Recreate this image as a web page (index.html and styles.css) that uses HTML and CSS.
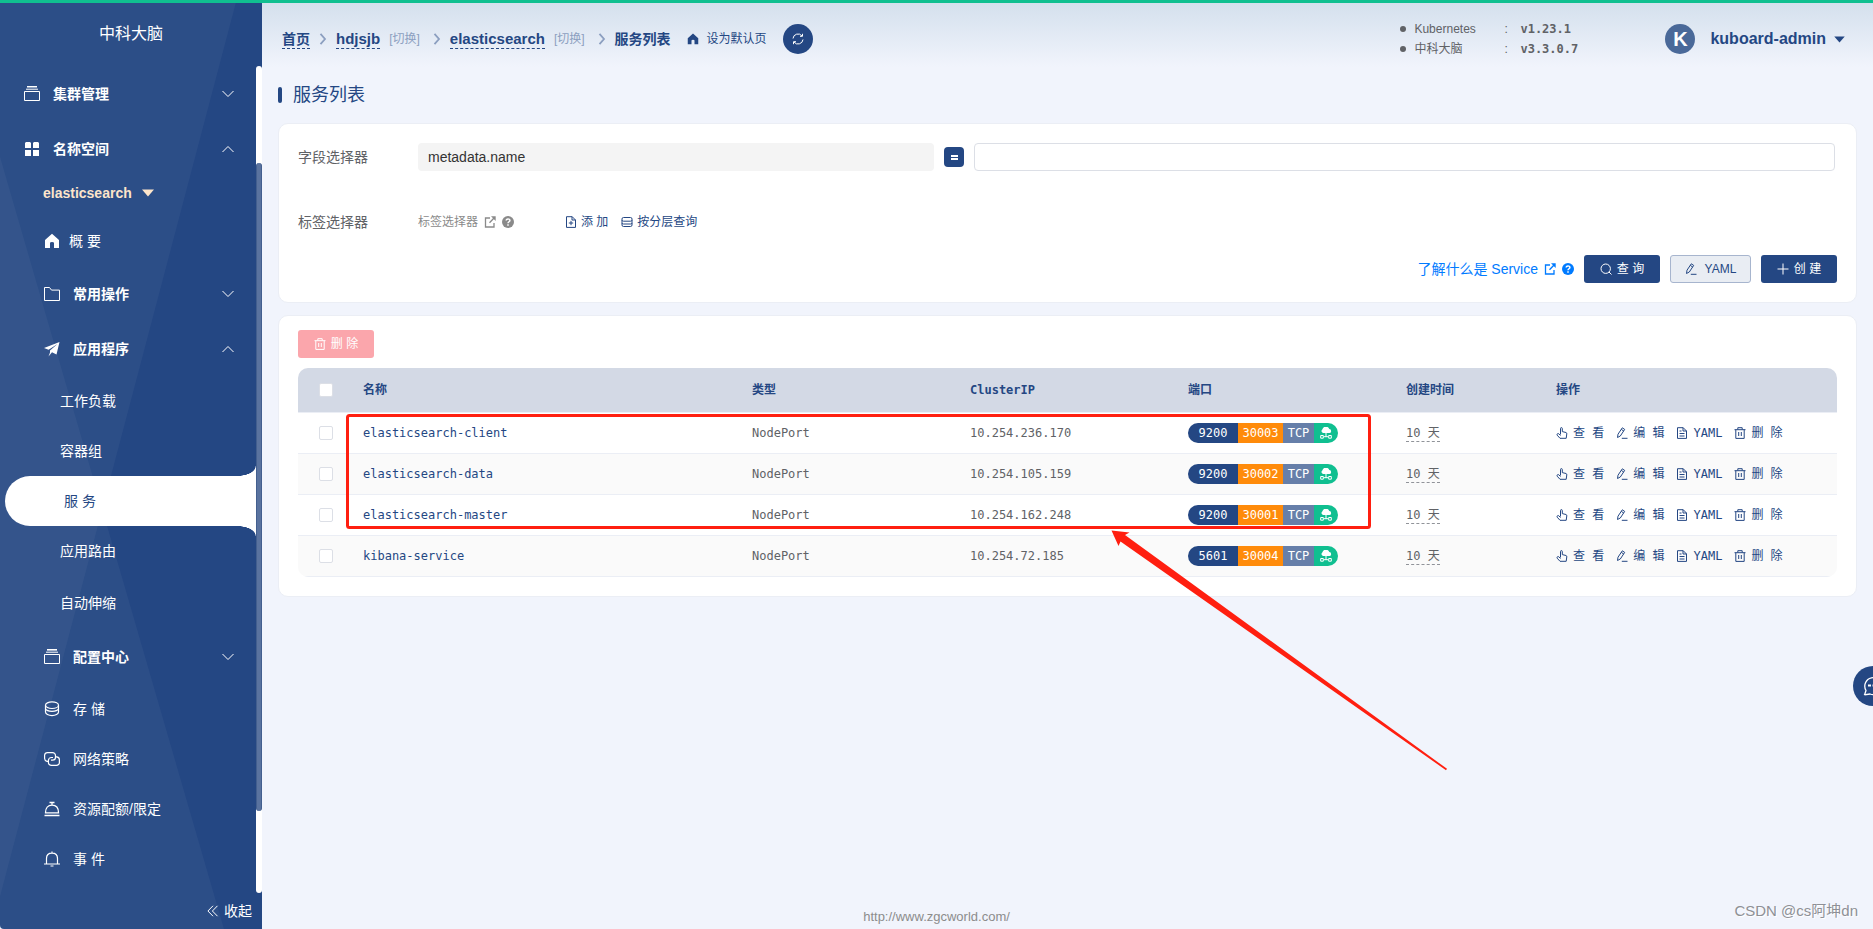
FILE: index.html
```
<!DOCTYPE html>
<html lang="zh-CN">
<head>
<meta charset="utf-8">
<title>服务列表</title>
<link rel="stylesheet" href="styles.css">
</head>
<body>
<svg class="sprite" aria-hidden="true">
  <symbol id="i-box" viewBox="0 0 16 16"><path d="M.5 5.5h15v9H.5zM2 3.2h12" fill="none" stroke="currentColor"/><path d="M3 0h10v1.6H3z" fill="currentColor"/></symbol>
  <symbol id="i-grid" viewBox="0 0 16 16"><path d="M2 1h4l1 1v5H1V2zM10 1h4l1 1v5H9V2zM1 9h6v6H1zM9 9h6v6H9z" fill="currentColor"/></symbol>
  <symbol id="i-home" viewBox="0 0 16 16"><path d="M8 .8 1 7v8h5v-5q0-1 2-1t2 1v5h5V7z" fill="currentColor"/></symbol>
  <symbol id="i-folder" viewBox="0 0 16 16"><path d="M.5 14.5v-13h5l2 2.6h8v10.400z" fill="none" stroke="currentColor"/></symbol>
  <symbol id="i-plane" viewBox="0 0 16 16"><path d="M15.500 1 0 7l4.600 1.800L13.500 3 6 9.600v1.900l-1.500 3.900L8 11.200l4.500 2.300z" fill="currentColor"/></symbol>
  <symbol id="i-coin" viewBox="0 0 16 16"><g fill="none" stroke="currentColor" stroke-width="1.200"><ellipse cx="8" cy="4.200" rx="6.500" ry="3.300"/><path d="M1.500 4.200V11c0 2 3 3.600 6.500 3.600s6.500-1.600 6.500-3.600V4.200M1.500 7.800C2.300 9.500 5 10.300 8 10.300s5.700-.8 6.500-2.500"/></g></symbol>
  <symbol id="i-link" viewBox="0 0 16 16"><g fill="none" stroke="currentColor" stroke-width="1.200"><path d="M4 10.300H3A3 3 0 0 1 .6 7.500V4.300A3 3 0 0 1 3.500 1.600h5a3 3 0 0 1 3 3v1.600a3 3 0 0 1-3 3H7"/><path d="M12 5.800h.6a3 3 0 0 1 2.800 3v2.600a3 3 0 0 1-3 3h-5a3 3 0 0 1-3-3V9.500a3 3 0 0 1 3-3H9"/></g></symbol>
  <symbol id="i-dish" viewBox="0 0 16 16"><path d="M.5 14.500h15M1.500 11.800h13C14.500 7 12 4.200 8 4.200S1.500 7 1.500 11.800zM8 4V2M5.500 1.500h5" fill="none" stroke="currentColor" stroke-width="1.300"/></symbol>
  <symbol id="i-bell" viewBox="0 0 16 16"><path d="M0 13h16M2.500 13V7.500C2.500 4 5 2.200 8 2.200S13.500 4 13.500 7.500V13M8 2V.5M6.500 15h3" fill="none" stroke="currentColor" stroke-width="1.200"/></symbol>
  <symbol id="i-down" viewBox="0 0 12 8"><path d="m.5 1 5.500 5.500L11.500 1" fill="none" stroke="currentColor"/></symbol>
  <symbol id="i-up" viewBox="0 0 12 8"><path d="M.5 7 6 1.500 11.500 7" fill="none" stroke="currentColor"/></symbol>
  <symbol id="i-caret" viewBox="0 0 12 8"><path d="M0 .5h12L6 7.500z" fill="currentColor"/></symbol>
  <symbol id="i-fold" viewBox="0 0 12 12"><path d="M6 .8.900 6 6 11.200M10.500.8 5.400 6l5.100 5.200" fill="none" stroke="currentColor"/></symbol>
  <symbol id="i-sep" viewBox="0 0 8 12"><path d="m1.500.800 4.500 5.200-4.500 5.200" fill="none" stroke="currentColor" stroke-width="1.800"/></symbol>
  <symbol id="i-refresh" viewBox="0 0 12 12"><path d="M1 5.500A5 5 0 0 1 10 3M10.500.800V3.300H8M11 6.500A5 5 0 0 1 2 9M1.500 11.200V8.700H4" fill="none" stroke="currentColor"/></symbol>
  <symbol id="i-ext" viewBox="0 0 12 12"><path d="M6 2H1.500v9h8.500V7M5.500 6.800 10.500 1.500" fill="none" stroke="currentColor" stroke-width="1.300"/><path d="M7 .3h4.700V5z" fill="currentColor"/></symbol>
  <symbol id="i-help" viewBox="0 0 12 12"><circle cx="6" cy="6" r="6" fill="currentColor"/><path d="M4.200 4.600C4.200 2.300 7.900 2.400 7.900 4.400 7.900 5.800 6 5.700 6 7.300M6 8.300v1.500" fill="none" stroke="#fff" stroke-width="1.500"/></symbol>
  <symbol id="i-docplus" viewBox="0 0 12 12"><path d="M1.500.7h5.700L10.500 4v7.400h-9zM7 .7V4h3.500M6 4.800v4.400M3.800 7h4.400" fill="none" stroke="currentColor"/></symbol>
  <symbol id="i-stack" viewBox="0 0 12 12"><path d="M2.500 1.500h7q1.500 0 1.500 1.500v6q0 1.500-1.500 1.500h-7Q1 10.500 1 9V3q0-1.500 1.500-1.500zM1 4.200q0 1 1.500 1h7q1.500 0 1.500-1M1 7q0 1 1.500 1h7Q11 8 11 7" fill="none" stroke="currentColor"/></symbol>
  <symbol id="i-search" viewBox="0 0 12 12"><circle cx="5.700" cy="5.700" r="4.700" fill="none" stroke="currentColor"/><path d="m9 9 2.500 2.500" stroke="currentColor"/></symbol>
  <symbol id="i-plus" viewBox="0 0 12 12"><path d="M6 .5v11M.5 6h11" stroke="currentColor"/></symbol>
  <symbol id="i-pen" viewBox="0 0 12 12"><path d="M1.500 10.500 2 7.200 6.300.8l2.400 1.600L4.300 9zM5.300 2.400l2.400 1.600M5.800 11.300H11.500" fill="none" stroke="currentColor"/></symbol>
  <symbol id="i-hand" viewBox="0 0 12 12"><path d="M4.500 7.500V1.600q0-1 .9-1 .9 0 .9 1v3l3.700.9q.9.300.8 1.300l-.6 4.500H4L1.200 8.200q-.4-1 .3-1.500.8-.5 1.500.3l1.500 1.500" fill="none" stroke="currentColor"/></symbol>
  <symbol id="i-doc" viewBox="0 0 12 12"><path d="M1.500.7h5.700L10.500 4v7.400h-9zM7 .7V4h3.500M3.500 4h2M3.500 6.500h5M3.500 9h5" fill="none" stroke="currentColor"/></symbol>
  <symbol id="i-trash" viewBox="0 0 12 12"><path d="M.5 2.700h11M3.800 2.500V.7h4.400v1.800M1.800 2.700v8.700h8.400V2.700M4.700 5v4M7.300 5v4" fill="none" stroke="currentColor"/></symbol>
  <symbol id="i-cloud" viewBox="0 0 12 12"><path d="M3.300 6A2 2 0 0 1 2.300 2.400 3.700 3.700 0 0 1 9.300 2a2 2 0 0 1-.3 4z" fill="currentColor"/><path d="M6 5v5M4 9.700h4M.7 8.500h2.600v2.700H.7zM8.700 8.500h2.600v2.700H8.700z" fill="none" stroke="currentColor"/></symbol>
  <symbol id="i-chat" viewBox="0 0 20 20"><path d="M1.500 19 3 14.500A8.500 8.500 0 1 1 7 18l-5.500.8z" fill="none" stroke="currentColor" stroke-width="1.300"/><path d="M5 9.500h3M9.500 9.500h2.500M13.500 9.500H16" stroke="currentColor" stroke-width="2"/></symbol>
</svg>
<div class="topbar"></div>
<div class="app">
  <aside class="sidebar">
    <div class="brand">中科大脑</div>
    <div class="side-body">
      <nav class="menu">
        <button class="item group"><svg class="ic16"><use href="#i-box"/></svg><span>集群管理</span><svg class="arrow"><use href="#i-down"/></svg></button>
        <button class="item group"><svg class="ic16"><use href="#i-grid"/></svg><span>名称空间</span><svg class="arrow"><use href="#i-up"/></svg></button>
        <button class="namespace"><span>elasticsearch</span><svg class="caret"><use href="#i-caret"/></svg></button>
        <a class="item sub home" href="#"><svg class="ic16"><use href="#i-home"/></svg><span>概 要</span></a>
        <button class="item sub group"><svg class="ic16"><use href="#i-folder"/></svg><span>常用操作</span><svg class="arrow"><use href="#i-down"/></svg></button>
        <button class="item sub group"><svg class="ic16"><use href="#i-plane"/></svg><span>应用程序</span><svg class="arrow"><use href="#i-up"/></svg></button>
        <a class="item leaf" href="#">工作负载</a>
        <a class="item leaf" href="#">容器组</a>
        <a class="item leaf active" href="#">服 务</a>
        <a class="item leaf" href="#">应用路由</a>
        <a class="item leaf last" href="#">自动伸缩</a>
        <button class="item sub group"><svg class="ic16"><use href="#i-box"/></svg><span>配置中心</span><svg class="arrow"><use href="#i-down"/></svg></button>
        <a class="item sub" href="#"><svg class="ic16"><use href="#i-coin"/></svg><span>存 储</span></a>
        <a class="item sub" href="#"><svg class="ic16"><use href="#i-link"/></svg><span>网络策略</span></a>
        <a class="item sub" href="#"><svg class="ic16"><use href="#i-dish"/></svg><span>资源配额/限定</span></a>
        <a class="item sub" href="#"><svg class="ic16"><use href="#i-bell"/></svg><span>事 件</span></a>
      </nav>
      <div class="track"><div class="thumb"></div></div>
    </div>
    <button class="fold"><svg class="ic12"><use href="#i-fold"/></svg><span>收起</span></button>
  </aside>
  <div class="page">
    <header class="header">
      <nav class="crumbs">
        <a class="crumb" href="#">首页</a>
        <svg class="sep"><use href="#i-sep"/></svg>
        <a class="crumb latin" href="#">hdjsjb</a>
        <a class="switch" href="#">[切换]</a>
        <svg class="sep wide"><use href="#i-sep"/></svg>
        <a class="crumb latin" href="#">elasticsearch</a>
        <a class="switch" href="#">[切换]</a>
        <svg class="sep wide"><use href="#i-sep"/></svg>
        <span class="current">服务列表</span>
        <button class="default-page"><svg class="ic12"><use href="#i-home"/></svg><span>设为默认页</span></button>
        <button class="refresh" aria-label="刷新"><svg class="ic12"><use href="#i-refresh"/></svg></button>
      </nav>
      <ul class="versions">
        <li><span class="v-name">Kubernetes</span><span class="v-colon">:</span><b>v1.23.1</b></li>
        <li><span class="v-name">中科大脑</span><span class="v-colon">:</span><b>v3.3.0.7</b></li>
      </ul>
      <button class="user"><span class="avatar">K</span><span>kuboard-admin</span><svg class="user-caret"><use href="#i-caret"/></svg></button>
    </header>
    <main class="main">
      <h1 class="title">服务列表</h1>
      <section class="card filter">
        <div class="row fields">
          <label class="label" for="field">字段选择器</label>
          <select class="field" id="field"><option>metadata.name</option></select>
          <button class="equals" aria-label="等于"><i></i></button>
          <input class="value" type="text" aria-label="字段值">
        </div>
        <div class="row tags">
          <span class="label">标签选择器</span>
          <a class="tag-help" href="#">标签选择器<svg class="ic12"><use href="#i-ext"/></svg><svg class="ic12"><use href="#i-help"/></svg></a>
          <button class="text-btn"><svg class="ic12"><use href="#i-docplus"/></svg><span>添 加</span></button>
          <button class="text-btn"><svg class="ic12"><use href="#i-stack"/></svg><span>按分层查询</span></button>
        </div>
        <div class="row actions">
          <a class="learn" href="#"><span>了解什么是 Service</span><svg class="ic12"><use href="#i-ext"/></svg><svg class="ic12"><use href="#i-help"/></svg></a>
          <button class="btn"><svg class="ic12"><use href="#i-search"/></svg><span>查 询</span></button>
          <button class="btn plain"><svg class="ic12"><use href="#i-pen"/></svg><span>YAML</span></button>
          <button class="btn"><svg class="ic12"><use href="#i-plus"/></svg><span>创 建</span></button>
        </div>
      </section>
      <section class="card list">
        <button class="btn danger" disabled><svg class="ic12"><use href="#i-trash"/></svg><span>删 除</span></button>
        <table class="table">
          <colgroup><col class="c-check"><col><col class="c-mid"><col class="c-mid"><col class="c-mid"><col class="c-time"><col class="c-ops"></colgroup>
          <thead>
            <tr><th class="check"><input type="checkbox" aria-label="全选"></th><th>名称</th><th>类型</th><th>ClusterIP</th><th>端口</th><th>创建时间</th><th>操作</th></tr>
          </thead>
          <tbody>
            <tr>
              <td class="check"><input type="checkbox" aria-label="elasticsearch-client"></td>
              <td><a class="name" href="#">elasticsearch-client</a></td><td>NodePort</td><td>10.254.236.170</td>
              <td><span class="port"><span class="p1">9200</span><span class="p2">30003</span><span class="p3">TCP</span><span class="p4"><svg class="ic12"><use href="#i-cloud"/></svg></span></span></td>
              <td><span class="age">10 天</span></td>
              <td><div class="ops"><button><svg class="ic12"><use href="#i-hand"/></svg>查 看</button><button><svg class="ic12"><use href="#i-pen"/></svg>编 辑</button><button><svg class="ic12"><use href="#i-doc"/></svg>YAML</button><button><svg class="ic12"><use href="#i-trash"/></svg>删 除</button></div></td>
            </tr>
            <tr>
              <td class="check"><input type="checkbox" aria-label="elasticsearch-data"></td>
              <td><a class="name" href="#">elasticsearch-data</a></td><td>NodePort</td><td>10.254.105.159</td>
              <td><span class="port"><span class="p1">9200</span><span class="p2">30002</span><span class="p3">TCP</span><span class="p4"><svg class="ic12"><use href="#i-cloud"/></svg></span></span></td>
              <td><span class="age">10 天</span></td>
              <td><div class="ops"><button><svg class="ic12"><use href="#i-hand"/></svg>查 看</button><button><svg class="ic12"><use href="#i-pen"/></svg>编 辑</button><button><svg class="ic12"><use href="#i-doc"/></svg>YAML</button><button><svg class="ic12"><use href="#i-trash"/></svg>删 除</button></div></td>
            </tr>
            <tr>
              <td class="check"><input type="checkbox" aria-label="elasticsearch-master"></td>
              <td><a class="name" href="#">elasticsearch-master</a></td><td>NodePort</td><td>10.254.162.248</td>
              <td><span class="port"><span class="p1">9200</span><span class="p2">30001</span><span class="p3">TCP</span><span class="p4"><svg class="ic12"><use href="#i-cloud"/></svg></span></span></td>
              <td><span class="age">10 天</span></td>
              <td><div class="ops"><button><svg class="ic12"><use href="#i-hand"/></svg>查 看</button><button><svg class="ic12"><use href="#i-pen"/></svg>编 辑</button><button><svg class="ic12"><use href="#i-doc"/></svg>YAML</button><button><svg class="ic12"><use href="#i-trash"/></svg>删 除</button></div></td>
            </tr>
            <tr>
              <td class="check"><input type="checkbox" aria-label="kibana-service"></td>
              <td><a class="name" href="#">kibana-service</a></td><td>NodePort</td><td>10.254.72.185</td>
              <td><span class="port"><span class="p1">5601</span><span class="p2">30004</span><span class="p3">TCP</span><span class="p4"><svg class="ic12"><use href="#i-cloud"/></svg></span></span></td>
              <td><span class="age">10 天</span></td>
              <td><div class="ops"><button><svg class="ic12"><use href="#i-hand"/></svg>查 看</button><button><svg class="ic12"><use href="#i-pen"/></svg>编 辑</button><button><svg class="ic12"><use href="#i-doc"/></svg>YAML</button><button><svg class="ic12"><use href="#i-trash"/></svg>删 除</button></div></td>
            </tr>
          </tbody>
        </table>
      </section>
    </main>
    <footer class="footer"><a href="#">http://www.zgcworld.com/</a></footer>
  </div>
</div>
<svg class="marker" viewBox="0 0 1110 360" aria-hidden="true">
  <rect x="1.500" y="1.500" width="1022" height="112" rx="2" fill="none" stroke="#ff1f10" stroke-width="3"/>
  <path d="M765.500 116.500 783.500 118.500 779 121 1101 354.800 1100 356.200 774.500 127.500 772.500 132z" fill="#ff1f10"/>
</svg>
<button class="chat" aria-label="反馈"><svg><use href="#i-chat"/></svg></button>
<div class="watermark">CSDN @cs阿坤dn</div>
</body>
</html>
```
FILE: styles.css
```
* { box-sizing: border-box; }

body {
  margin: 0;
  min-height: 100vh;
  position: relative;
  overflow: hidden;
  display: flex;
  flex-direction: column;
  background: #f1f4fc;
  color: #606266;
  font: 14px/20px "Liberation Sans", "Noto Sans CJK SC", sans-serif;
}

a { color: inherit; text-decoration: none; }
button { margin: 0; padding: 0; border: 0; background: none; color: inherit; font: inherit; }
svg { display: block; flex: none; }

.sprite { position: absolute; width: 0; height: 0; }
.ic16 { width: 16px; height: 16px; }
.ic12 { width: 12px; height: 12px; }

.topbar { height: 3px; background: #10bf90; }
.app { flex: 1; display: flex; }

/* Sidebar */
.sidebar {
  position: relative;
  width: 262px;
  display: flex;
  flex-direction: column;
  background: #244783;
  color: #fff;
  border-bottom-left-radius: 4px;
  overflow: hidden;
}
.sidebar::before, .sidebar::after {
  content: "";
  position: absolute;
  inset: 0;
  background: rgba(255, 255, 255, .04);
}
.sidebar::before { clip-path: polygon(0 0, 90% 0, 0 96.500%); }
.sidebar::after { clip-path: polygon(0 16.600%, 85.500% 100%, 0 100%); }
.brand, .side-body, .fold { position: relative; z-index: 1; }
.brand { height: 63px; line-height: 62px; text-align: center; font-size: 16px; }
.side-body { flex: 1; display: flex; }
.menu { flex: 1; display: flex; flex-direction: column; }
.item { height: 50px; display: flex; align-items: center; gap: 13px; text-align: left; }
.group { height: 55px; padding-left: 24px; padding-right: 22px; font-weight: bold; }
.sub { padding-left: 44px; }
.home { gap: 9px; }
.leaf { padding-left: 60px; }
.last { height: 53px; }
.arrow { width: 12px; height: 8px; margin-left: auto; }
.namespace {
  height: 40px;
  padding: 0 0 6px 43px;
  display: flex;
  align-items: center;
  gap: 10px;
  color: #fde5cb;
  font-weight: bold;
}
.caret { width: 12px; height: 8px; }
.active {
  position: relative;
  margin-left: 5px;
  padding-left: 59px;
  background: #fff;
  color: #244783;
  border-radius: 25px 0 0 25px;
}
.active::before, .active::after {
  content: "";
  position: absolute;
  right: 0;
  width: 18px;
  height: 10px;
}
.active::before { bottom: 100%; background: radial-gradient(ellipse 18px 10px at 0 0, transparent 96%, #fff 100%); }
.active::after { top: 100%; background: radial-gradient(ellipse 18px 10px at 0 100%, transparent 96%, #fff 100%); }
.track {
  width: 6px;
  display: flex;
  flex-direction: column;
  background: #fff;
  border-radius: 3px;
}
.track::before { content: ""; flex: 97; }
.track::after { content: ""; flex: 82; }
.thumb { flex: 648; background: #5a739f; border-left: 1px solid #435f8f; border-right: 1px solid #435f8f; border-radius: 3px; }
.fold { height: 36px; padding-right: 10px; display: flex; align-items: center; justify-content: flex-end; gap: 5px; }

/* Header */
.page { flex: 1; min-width: 0; display: flex; flex-direction: column; }
.header {
  height: 72px;
  padding: 0 28px 0 20px;
  display: flex;
  align-items: center;
  background: linear-gradient(#d4e0ed, #f1f4fc 64px);
  color: #244783;
}
.crumbs { display: flex; align-items: center; flex: 1; }
.crumb { line-height: 18px; border-bottom: 1px dashed #244783; font-weight: bold; }
.latin { font-size: 15px; }
.sep { width: 8px; height: 12px; margin: 0 9px; color: #8c9fc0; }
.wide { margin-left: 13px; }
.switch { margin-left: 9px; font-size: 12px; color: #8c9fc0; }
.current { font-weight: bold; }
.default-page { margin-left: 16px; display: flex; align-items: center; gap: 8px; font-size: 12px; }
.refresh {
  width: 30px;
  height: 30px;
  margin-left: 16px;
  display: grid;
  place-items: center;
  border-radius: 50%;
  background: #244783;
  color: #fff;
}
.versions { list-style: none; margin: 0 87px 0 0; padding: 0; color: #606266; font-size: 12px; }
.versions li { display: flex; align-items: center; height: 20px; }
.versions li::before { content: ""; width: 6px; height: 6px; margin-right: 8px; border-radius: 50%; background: #606266; }
.v-name { width: 90px; }
.v-colon { width: 16px; }
.versions b { width: 58px; font-family: "DejaVu Sans Mono", monospace; }
.user { display: flex; align-items: center; font-size: 16px; font-weight: bold; }
.avatar { width: 30px; margin-right: 15px; border-radius: 50%; background: #4a6999; color: #fff; font-size: 20px; line-height: 30px; }
.user-caret { width: 11px; height: 7px; margin-left: 8px; }

/* Content */
.main { padding: 0 16px; flex: 1; }
.title {
  margin: 0 0 8px;
  height: 40px;
  display: flex;
  align-items: center;
  gap: 11px;
  color: #244783;
  font-size: 18px;
  font-weight: normal;
}
.title::before { content: ""; width: 4px; height: 16px; border-radius: 2px; background: #244783; }
.card { border: 1px solid #ebeef5; border-radius: 10px; background: #fff; }
.filter { padding: 19px; }
.row { display: flex; align-items: center; height: 28px; }
.fields { display: grid; grid-template-columns: 120px 3fr 40px 5fr; padding-right: 2px; }
.label { width: 120px; flex: none; }
.field {
  min-width: 0;
  height: 28px;
  padding: 0 10px;
  appearance: none;
  border: 0;
  border-radius: 4px;
  background: #f4f4f4;
  color: #333;
  font: inherit;
}
.equals { width: 20px; height: 20px; margin: 0 10px; display: grid; place-items: center; border-radius: 4px; background: #244783; }
.equals i { width: 7px; height: 5px; border: solid #fff; border-width: 2px 0; }
.value { min-width: 0; height: 28px; padding: 0 10px; border: 1px solid #dcdfe6; border-radius: 4px; background: #fff; font: inherit; }
.tags { margin-top: 37px; font-size: 12px; }
.tags .label { font-size: 14px; }
.tag-help { display: flex; align-items: center; gap: 6px; margin-right: 51px; color: #8a8a8a; }
.text-btn { display: flex; align-items: center; gap: 4px; margin-right: 13px; color: #244783; }
.actions { margin-top: 19px; justify-content: flex-end; gap: 10px; }
.learn { display: flex; align-items: center; gap: 6px; color: #007bff; }
.btn {
  min-width: 76px;
  height: 28px;
  display: inline-flex;
  align-items: center;
  justify-content: center;
  gap: 5px;
  border-radius: 3px;
  background: #244783;
  color: #fff;
  font-size: 12px;
}
.plain { min-width: 81px; gap: 8px; border: 1px solid #a7b5ce; background: #e9edf3; color: #244783; }
.danger { background: #fba6ac; }
.list { margin-top: 12px; padding: 14px 19px 19px; }
.list .btn { display: flex; }

/* Table */
.table {
  width: 100%;
  margin-top: 10px;
  table-layout: fixed;
  border-collapse: separate;
  border-spacing: 0;
  border-radius: 10px;
  overflow: hidden;
  font-size: 12px;
  font-family: "DejaVu Sans Mono", "Noto Sans CJK SC", monospace;
}
.c-check { width: 55px; }
.c-mid { width: 218px; }
.c-time { width: 150px; }
.c-ops { width: 291px; }
th, td { height: 41px; padding: 0 10px; border-bottom: 1px solid #ebeef5; text-align: left; }
th { height: 45px; background: #d3d9e5; color: #244783; }
tbody tr:nth-child(even) { background: #fafafa; }
.check { text-align: center; padding: 0; }
.check input { appearance: none; display: block; width: 14px; height: 14px; margin: 0 auto; border: 1px solid #dcdfe6; border-radius: 2px; background: #fff; }
.name { color: #244783; }
.port { display: flex; width: 150px; height: 20px; border-radius: 10px; overflow: hidden; color: #fff; line-height: 20px; text-align: center; }
.p1 { flex: 50; background: #244783; }
.p2 { flex: 45; background: #ff8b0a; }
.p3 { flex: 31; background: #667fa9; }
.p4 { flex: 24; display: grid; place-items: center; background: #10bf90; }
.age { display: inline-block; line-height: 16px; border-bottom: 1px dashed #909399; }
.ops { display: flex; gap: 12px; color: #244783; }
.ops button { display: flex; align-items: center; gap: 5px; }

.footer { height: 24px; padding-right: 262px; text-align: center; font-size: 13px; line-height: 24px; color: #8c8c8c; }

/* Layers above the page */
.marker { position: absolute; left: 346px; top: 414px; width: 1110px; height: 360px; pointer-events: none; }
.chat {
  position: absolute;
  right: -20px;
  top: 666px;
  width: 40px;
  height: 40px;
  display: grid;
  place-items: center;
  border-radius: 50%;
  background: #244783;
  color: #fff;
}
.chat svg { width: 20px; height: 20px; }
.watermark { position: absolute; right: 15px; bottom: 8px; font-size: 15px; color: #8e9096; text-shadow: 1px 1px #fff; }
```
